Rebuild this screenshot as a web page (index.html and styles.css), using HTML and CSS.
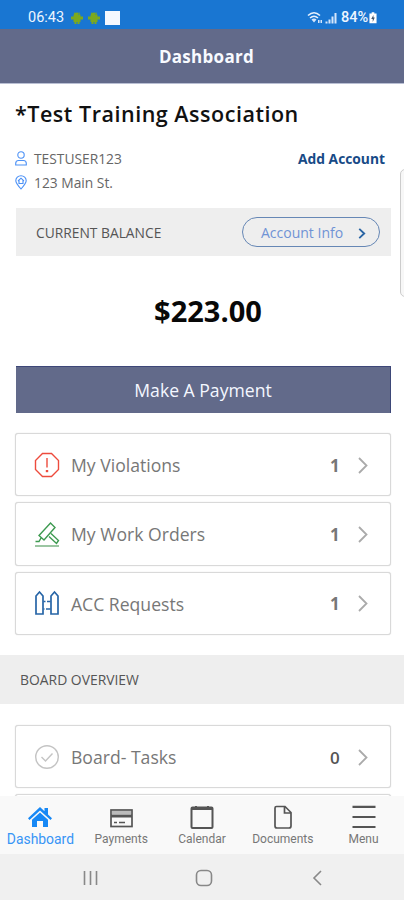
FILE: index.html
```html
<!DOCTYPE html>
<html lang="en">
<head>
<meta charset="utf-8">
<title>Dashboard</title>
<link rel="stylesheet" href="styles.css">
</head>
<body>
<div class="phone">
  <div class="status">
    <span class="clock">06:43</span>
    <svg class="droid" viewBox="0 0 12 12"><path d="M2.500 4a3.500 3.500 0 0 1 7 0v6h-7zM0 4.500h12v3H0zM3.500 10h2v2h-2zM6.500 10h2v2h-2zM3 0l2 2-1 1zM9 0L7 2l1 1z"/></svg>
    <svg class="droid second" viewBox="0 0 12 12"><path d="M2.500 4a3.500 3.500 0 0 1 7 0v6h-7zM0 4.500h12v3H0zM3.500 10h2v2h-2zM6.500 10h2v2h-2zM3 0l2 2-1 1zM9 0L7 2l1 1z"/></svg>
    <span class="square"></span>
    <svg class="signals" viewBox="0 0 30 14"><path d="M1 4.500Q7 -1 13 4.500M3 7Q7 3.500 11 7" fill="none" stroke="#e7f1fd" stroke-width="1.600"/><path d="M4.500 8.500Q7 6.500 9.500 8.500L7 11.500zM11 9h1.500v3H11zM13.500 9H15v3h-1.500zM18.500 10.500h2v2h-2zM21.500 8.500h2v4h-2zM24.500 5.500h2v7h-2zM27.500 2h2v10.500h-2z" fill="#d5e6fb"/></svg>
    <span class="percent">84%</span>
    <svg class="battery" viewBox="0 0 9 13"><path d="M3 0h3v1.500h2.500V12.500H.5V1.500H3z" fill="#fff"/><path d="M5 3L2.500 7.500h1.700V11L6.500 6H5z" fill="#42566d"/></svg>
  </div>
  <header class="header">Dashboard</header>

  <main class="main">
    <h1 class="title">*Test Training Association</h1>
    <div class="account">
      <div class="details">
        <div class="detail">
          <svg viewBox="0 0 12 15"><circle cx="6" cy="4" r="3.200"/><path d="M.7 14v-1.500Q.7 9.500 3.500 9.500h5q2.800 0 2.800 3V14z"/></svg>
          <span class="user">TESTUSER123</span>
        </div>
        <div class="detail">
          <svg viewBox="0 0 12 15"><path d="M6 14Q.8 8 .8 5.700a5.200 5 0 0 1 10.400 0Q11.200 8 6 14zM3 6l3-2.800L9 6M4 5.500v3h4v-3"/></svg>
          <span class="address">123 Main St.</span>
        </div>
      </div>
      <a class="add">Add Account</a>
    </div>
    <section class="balance">
      <span class="balance-label">CURRENT BALANCE</span>
      <a class="info"><span>Account Info</span><svg viewBox="0 0 7 10"><path d="M1 .8L5.500 5 1 9.200"/></svg></a>
    </section>
    <div class="amount"><span>$223.00</span></div>
    <a class="pay"><span>Make A Payment</span></a>

    <div class="cards">
      <a class="card">
        <svg class="icon red" viewBox="0 0 26 26"><path d="M8.500 1.500h9l7 7v9l-7 7h-9l-7-7v-9z"/><path d="M13 6v9.500" /><path d="M13 18v2.200" stroke-width="2.400"/></svg>
        <span class="label">My Violations</span><b>1</b>
        <svg class="chevron" viewBox="0 0 10 17"><path d="M1 1l7.500 7.500L1 16"/></svg>
      </a>
      <a class="card">
        <svg class="icon green" viewBox="0 0 26 26"><path d="M5 14.500L16.500 2 21 6.500 10 19zM17 12.500l7.500 7-2 3-7.500-7M1.500 20.500H5l2-3.500"/><path d="M1 25h24" class="base"/></svg>
        <span class="label">My Work Orders</span><b>1</b>
        <svg class="chevron" viewBox="0 0 10 17"><path d="M1 1l7.500 7.500L1 16"/></svg>
      </a>
      <a class="card">
        <svg class="icon blue" viewBox="0 0 26 26"><path d="M2 6l3.500-4L9 6v18H2zM17 6l3.500-4L24 6v18h-7z"/><path d="M9.500 11.500h2M13 11.500h3.500M12 19h4.500M9.500 19h1"/></svg>
        <span class="label">ACC Requests</span><b>1</b>
        <svg class="chevron" viewBox="0 0 10 17"><path d="M1 1l7.500 7.500L1 16"/></svg>
      </a>
    </div>
    <h2 class="overview">BOARD OVERVIEW</h2>
    <div class="cards board">
      <a class="card">
        <svg class="icon gray" viewBox="0 0 26 26"><circle cx="13" cy="13" r="11.300"/><path d="M7.500 13l4 4 7-7.500"/></svg>
        <span class="label">Board- Tasks</span><b class="dark">0</b>
        <svg class="chevron" viewBox="0 0 10 17"><path d="M1 1l7.500 7.500L1 16"/></svg>
      </a>
      <a class="card"></a>
    </div>
  </main>

  <nav class="tabs">
    <a class="tab active"><svg viewBox="0 0 26 24"><path class="solid" d="M13 2l4.500 4.200V3H21v6.500l4 3.800-1.500 1.700L13 5.500 2.500 15 1 13.300z"/><path class="solid" d="M13 7.500l8 7.200V22h-5v-6h-6v6H5v-7.300z"/></svg><span>Dashboard</span></a>
    <a class="tab"><svg viewBox="0 0 26 24"><rect x="3" y="5" width="21" height="16.500" stroke-width="1.700"/><path class="solid" d="M3 9.500h21v3H3z"/><path d="M4 7.500h19" stroke="#bbb" stroke-width="3"/><path d="M6 17.500h3M11 17.500h6" stroke-width="1.700"/></svg><span>Payments</span></a>
    <a class="tab"><svg viewBox="0 0 26 24"><rect x="2.500" y="2.500" width="21" height="20.500" rx="1"/><path d="M2.500 4h21M7 1v3M19 1v3"/></svg><span>Calendar</span></a>
    <a class="tab"><svg viewBox="0 0 26 24"><path d="M6.500 1.500h8.500l6 6V21q0 2-2 2H7q-2 0-2-2V3q0-1.500 1.500-1.500zM14.500 1.500v6.500H21" stroke-width="1.700"/></svg><span>Documents</span></a>
    <a class="tab"><svg viewBox="0 0 26 24"><path d="M1.500 1.800h23M1.500 12h23M1.500 22h23" stroke-width="2.200"/></svg><span>Menu</span></a>
  </nav>
  <div class="system">
    <svg viewBox="0 0 18 18"><path d="M2.500 2v14M8.500 2v14M14.500 2v14"/></svg>
    <svg viewBox="0 0 18 18"><rect x="1.500" y="1.500" width="15" height="15" rx="4.500"/></svg>
    <svg viewBox="0 0 18 18"><path d="M13 2L6 9l7 7"/></svg>
  </div>
  <div class="drawer"></div>
</div>
</body>
</html>
```
FILE: styles.css
```css
* { box-sizing: border-box; }
body { margin: 0; background: #fff; font-family: "Open Sans", sans-serif; }
svg { display: block; flex: none; fill: none; }
.phone { position: relative; width: 404px; height: 900px; overflow: hidden; display: flex; flex-direction: column; }

.status { height: 29px; flex: none; background: #1976d2; color: #edf5ff; display: flex; align-items: center; padding: 7px 27px 0 28px; font: 500 14.500px/20px Roboto, sans-serif; }
.clock { width: 43px; font-weight: 400; }
.droid { width: 12px; height: 12px; fill: #7ca91e; }
.second { margin-left: 5px; }
.square { width: 15px; height: 14px; background: #f5f8ff; margin-left: 5px; }
.signals { width: 30px; height: 14px; margin-left: auto; }
.percent { width: 28px; margin-left: 4px; white-space: nowrap; }
.battery { width: 8px; height: 12px; }

.header { height: 55px; flex: none; background: #626a8a; border-bottom: 1px solid #b9bfd3; color: #f8faff; text-align: center; font-size: 17px; letter-spacing: 0.300px; font-weight: 700; line-height: 56px; padding-left: 9px; }
.main { flex: 1; min-height: 0; overflow: hidden; }
.title { margin: 14px 0 0 15px; font-size: 21.500px; letter-spacing: 0.520px; line-height: 32px; font-weight: 600; color: #111; white-space: nowrap; }
.account { display: flex; justify-content: space-between; padding: 16px 19px 0 15px; height: 78px; }
.detail { display: flex; align-items: center; height: 24px; font-size: 13.800px; color: #666; gap: 7px; }
.detail svg { width: 12px; height: 15px; stroke: #4c91f6; stroke-width: 1.100; }
.add { font-size: 13.800px; line-height: 25px; font-weight: 700; color: #174a86; white-space: nowrap; }
.balance { margin: 0 13px 0 16px; height: 48px; background: #eee; display: flex; align-items: center; justify-content: space-between; padding: 0 11px 0 20px; }
.balance-label { font-size: 13.800px; color: #555; padding-top: 1px; }
.info { width: 138px; height: 30px; border: 1.500px solid #6687b5; border-radius: 15px; display: flex; align-items: center; justify-content: space-between; padding: 0 13px 0 18px; font-size: 14px; color: #7093d5; white-space: nowrap; }
.info svg { width: 8px; height: 11px; stroke: #2a65a4; stroke-width: 1.700; margin-top: 3px; }
.amount { height: 110px; line-height: 110px; text-align: center; font-size: 29px; font-weight: 700; color: #080808; padding-left: 12px; }
.pay { display: block; margin: 0 13px 0 16px; height: 47px; background: #626a8a; border-top: 1px solid #3d4778; border-right: 1px solid #3d4778; color: #f4f7ff; text-align: center; font-size: 17.600px; line-height: 47px; }

.cards { margin: 20px 13px 0 15px; display: flex; flex-direction: column; gap: 6px; }
.card { height: 63.300px; flex: none; border: 1.500px solid #d9d9d9; border-radius: 3px; display: flex; align-items: center; padding: 0 22px 0 19px; background: #fff; box-shadow: 0 0 1px #ccc; }
.icon { width: 26px; height: 26px; stroke-width: 1.400; margin: 0 10px 0 -1px; }
.red { stroke: #ed4b3d; }
.green { stroke: #3d9a50; }
.green .base { stroke: #9bc6a2; stroke-width: 2; }
.blue { stroke: #2765a7; stroke-width: 1.700; }
.gray { stroke: #c4c4c4; }
.label { font-size: 17.600px; color: #777; white-space: nowrap; padding: 1px 0 0 1px; }
.card b { margin-left: auto; width: 11px; font-size: 17px; font-weight: 700; color: #777; padding-top: 1px; }
.card .dark { font-weight: 600; color: #555; }
.chevron { width: 10px; height: 17px; margin: 1px 0 0 17px; stroke: #aaa; stroke-width: 1.800; }
.overview { margin: 20px 0 0; height: 49px; background: #eee; font-size: 13.900px; line-height: 49px; font-weight: 400; color: #555; padding-left: 20px; }
.board { margin-top: 21px; }

.tabs { height: 58px; flex: none; background: #f9f9f9; display: grid; grid-template-columns: repeat(5, 80.800px); font-family: Roboto, sans-serif; font-size: 12px; color: #777; }
.tab { display: flex; flex-direction: column; align-items: center; padding-top: 9px; line-height: 17px; }
.tab svg { width: 26px; height: 24px; stroke: #555; stroke-width: 2; }
.tab .solid { fill: #555; stroke: none; }
.tab span { margin-top: 2px; white-space: nowrap; }
.active { color: #3795f6; font-size: 13.900px; }
.tab.active .solid { fill: #1788f5; }
.system { height: 46px; flex: none; background: #f0f0f0; display: flex; justify-content: space-between; align-items: center; padding: 2px 78px 0 82px; }
.system svg { width: 18px; height: 18px; stroke: #888; stroke-width: 1.600; }
.drawer { position: absolute; left: 400px; top: 169px; width: 20px; height: 128px; background: #f7f7f7; border: 1.500px solid #ccc; border-radius: 5px; }
```
